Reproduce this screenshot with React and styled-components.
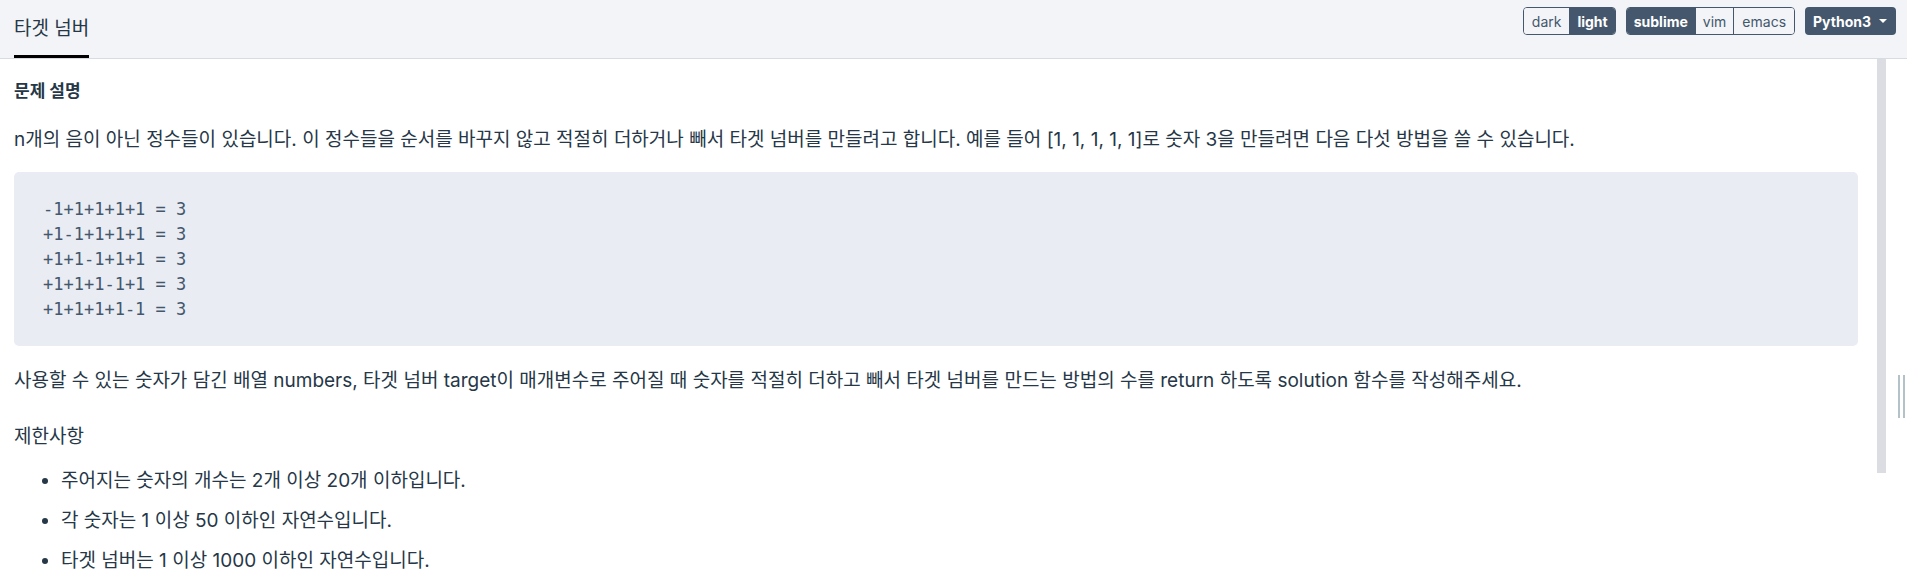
import styled, { createGlobalStyle } from 'styled-components';

const GlobalStyle = createGlobalStyle`
  html, body {
    margin: 0;
    padding: 0;
    background: #ffffff;
  }
  body {
    font-family: Inter, 'Noto Sans CJK KR', sans-serif;
    color: #263747;
  }
`;

const Page = styled.div`
  width: 1907px;
  height: 582px;
  display: flex;
  flex-direction: column;
  background: #ffffff;
  overflow: hidden;
`;

const Header = styled.header`
  height: 59px;
  flex-shrink: 0;
  box-sizing: border-box;
  display: flex;
  align-items: flex-start;
  justify-content: space-between;
  padding: 0 11px 0 14px;
  background: #f2f4f7;
  border-bottom: 1px solid #d7dce2;
`;

const Tab = styled.div`
  height: 58px;
  box-sizing: border-box;
  padding-top: 13px;
  font-size: 19px;
  color: #263747;
  border-bottom: 3px solid #000000;
  margin-bottom: -1px;
`;

const Controls = styled.div`
  display: flex;
  gap: 10px;
  padding-top: 7px;
`;

const Group = styled.div`
  display: flex;
  height: 28px;
  box-sizing: border-box;
  border: 1px solid #44576c;
  border-radius: 4px;
  overflow: hidden;
`;

const Segment = styled.div`
  display: flex;
  align-items: center;
  padding: 0 ${p => p.$pad || 8}px;
  font-size: 14px;
  font-weight: ${p => (p.$active ? 700 : 400)};
  color: ${p => (p.$active ? '#ffffff' : '#44576c')};
  background: ${p => (p.$active ? '#44576c' : '#f2f4f7')};

  & + & {
    border-left: 1px solid #44576c;
  }
`;

const Dropdown = styled.div`
  display: flex;
  align-items: center;
  gap: 8px;
  height: 28px;
  box-sizing: border-box;
  padding: 0 9px 0 8px;
  border-radius: 4px;
  background: #44576c;
  color: #ffffff;
  font-size: 14px;
  font-weight: 700;
`;

const Caret = styled.span`
  width: 0;
  height: 0;
  border-left: 4px solid transparent;
  border-right: 4px solid transparent;
  border-top: 4px solid #ffffff;
`;

const Body = styled.div`
  flex: 1;
  display: flex;
  align-items: flex-start;
`;

const Content = styled.div`
  flex: 1;
  padding: 0 19px 0 14px;
`;

const Scrollbar = styled.div`
  width: 9px;
  height: 414px;
  background: #dcdde2;
`;

const Gutter = styled.div`
  width: 21px;
  display: flex;
  justify-content: flex-end;
  padding-top: 316px;
  padding-right: 2px;
  box-sizing: border-box;
`;

const Grip = styled.div`
  width: 7px;
  height: 43px;
  box-sizing: border-box;
  border-left: 2px solid #b3c1c9;
  border-right: 2px solid #b3c1c9;
`;

const SectionTitle = styled.h5`
  margin: 0;
  padding-top: 20px;
  font-size: 17px;
  font-weight: 700;
  line-height: 24px;
  color: #263747;
`;

const Paragraph = styled.p`
  margin: ${p => p.$top || 0}px 0 0;
  font-size: 19px;
  line-height: 28px;
  color: #263747;
`;

const CodeBlock = styled.pre`
  margin: 18px 0 0;
  padding: 25px 29px 24px;
  border-radius: 5px;
  background: #e9ecf3;
  font-family: 'DejaVu Sans Mono', 'Liberation Mono', monospace;
  font-size: 17px;
  line-height: 25px;
  color: #44576c;
`;

const List = styled.ul`
  margin: 16px 0 0;
  padding-left: 47px;
`;

const Item = styled.li`
  font-size: 19px;
  line-height: 28px;
  color: #263747;

  & + & {
    margin-top: 12px;
  }
`;

const codeLines = [
  '-1+1+1+1+1 = 3',
  '+1-1+1+1+1 = 3',
  '+1+1-1+1+1 = 3',
  '+1+1+1-1+1 = 3',
  '+1+1+1+1-1 = 3',
];

const rules = [
  '주어지는 숫자의 개수는 2개 이상 20개 이하입니다.',
  '각 숫자는 1 이상 50 이하인 자연수입니다.',
  '타겟 넘버는 1 이상 1000 이하인 자연수입니다.',
];

export default function App() {
  return (
    <Page>
      <GlobalStyle />
      <Header>
        <Tab>타겟 넘버</Tab>
        <Controls>
          <Group>
            <Segment $pad={8}>dark</Segment>
            <Segment $active $pad={7}>light</Segment>
          </Group>
          <Group>
            <Segment $active $pad={7}>sublime</Segment>
            <Segment $pad={7}>vim</Segment>
            <Segment $pad={8}>emacs</Segment>
          </Group>
          <Dropdown>
            Python3
            <Caret />
          </Dropdown>
        </Controls>
      </Header>
      <Body>
        <Content>
          <SectionTitle>문제 설명</SectionTitle>
          <Paragraph $top={23}>
            n개의 음이 아닌 정수들이 있습니다. 이 정수들을 순서를 바꾸지 않고 적절히 더하거나 빼서 타겟 넘버를 만들려고 합니다. 예를 들어 [1, 1, 1, 1, 1]로 숫자 3을 만들려면 다음 다섯 방법을 쓸 수 있습니다.
          </Paragraph>
          <CodeBlock>{codeLines.join('\n')}</CodeBlock>
          <Paragraph $top={21}>
            사용할 수 있는 숫자가 담긴 배열 numbers, 타겟 넘버 target이 매개변수로 주어질 때 숫자를 적절히 더하고 빼서 타겟 넘버를 만드는 방법의 수를 return 하도록 solution 함수를 작성해주세요.
          </Paragraph>
          <Paragraph $top={28}>제한사항</Paragraph>
          <List>
            {rules.map(r => (
              <Item key={r}>{r}</Item>
            ))}
          </List>
        </Content>
        <Scrollbar />
        <Gutter>
          <Grip />
        </Gutter>
      </Body>
    </Page>
  );
}
